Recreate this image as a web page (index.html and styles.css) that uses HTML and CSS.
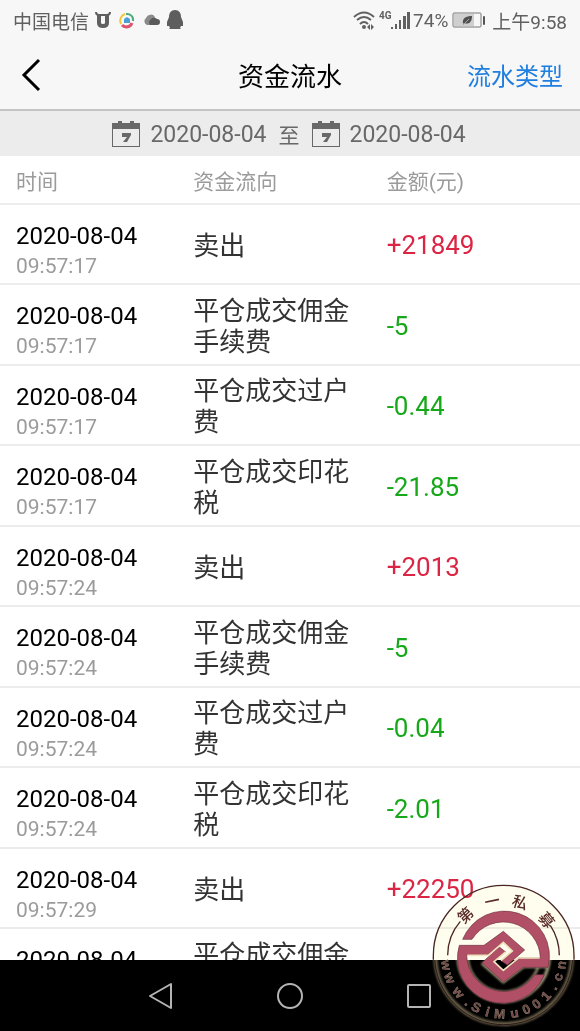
FILE: index.html
```
<!DOCTYPE html>
<html lang="zh-CN">
<head>
    <meta charset="UTF-8">
    <title>资金流水</title>
    <meta name="viewport" content="width=device-width">
    <link rel="stylesheet" href="styles.css">
</head>
<body>
    <div class="status">
        <div class="status-group">
            <span>中国电信</span>
            <svg class="icon-bull" width="18" height="18" viewBox="0 0 18 18" fill="none" stroke="#606060">
                <path d="M2 1q0 3 3 3h8q3 0 3-3" stroke-width="2"/>
                <path d="M5 4v8q0 3 4 3t4-3V4" stroke-width="4"/>
            </svg>
            <svg width="18" height="18" viewBox="0 0 18 18" fill="none" stroke-width="2">
                <path d="M3 13A7 7 0 0 1 7 3" stroke="#f0c63c"/>
                <path d="M8 3a6 6 0 0 1 7 7" stroke="#4dac7c"/>
                <path d="M14 12a6 6 0 0 1-10 2" stroke="#dd536c" stroke-width="3"/>
                <path d="M6 12V8l3-2 3 2v4z" fill="#4c9fd4"/>
            </svg>
            <svg width="18" height="18" viewBox="0 0 18 18">
                <path d="M5 14a4 4 0 0 1-1-7 5 5 0 0 1 9-1l-3 8z" fill="#8a8a8a"/>
                <path d="M8 14a4 4 0 0 1 1-6 4 4 0 0 1 6 0 3 3 0 0 1 0 6z" fill="#5a5a5a"/>
            </svg>
            <svg width="18" height="20" viewBox="0 0 18 20">
                <path d="M9 0c4 0 6 3 6 7l2 5v4h-2l-1 2 1 1H3l1-1-1-2H1v-4l2-5c0-4 2-7 6-7z" fill="#5e5e5e"/>
            </svg>
        </div>
        <div class="status-group status-right">
            <svg width="22" height="20" viewBox="0 0 22 20" fill="none" stroke="#606060" stroke-width="2">
                <path d="M1 7q10-9 20 0M4 10q7-6 14 0M7 14q4-4 8 0"/>
                <circle cx="11" cy="17" r="2" fill="#606060" stroke="none"/>
                <path d="M17 14l-3 3 3 3zM18 14l3 3-3 3z" fill="#606060" stroke="none"/>
            </svg>
            <svg class="icon-signal" width="32" height="20" viewBox="0 0 32 20" fill="#606060">
                <text class="net" x="0" y="9">4G</text>
                <path d="M12 17h2v2h-2zM16 14h2v5h-2zM20 10h2v9h-2zM24 6h3v13h-3zM28 2h3v17h-3z"/>
            </svg>
            <span>74%</span>
            <svg class="icon-battery" width="34" height="18" viewBox="0 0 34 18">
                <rect x="1" y="2" width="28" height="14" rx="1" fill="#f7f7f7" stroke="#777"/>
                <path d="M2 3h20v12H2z" fill="#cfcfcf"/>
                <path d="M11 13c-1-6 3-8 9-8 0 6-3 9-8 7z" fill="#505050"/>
                <path d="M11 14l6-6" stroke="#aaa"/>
                <rect x="31" y="5" width="2" height="9" rx="1" fill="#555"/>
            </svg>
            <span>上午9:58</span>
        </div>
    </div>

    <header class="bar">
        <button class="back" type="button" aria-label="返回">
            <svg width="20" height="34" viewBox="0 0 20 34" fill="none" stroke="#000" stroke-width="3">
                <path d="M18 2L3 17l15 15"/>
            </svg>
        </button>
        <h1>资金流水</h1>
        <a class="type" href="#">流水类型</a>
    </header>

    <div class="range">
        <button class="date" type="button">
            <svg width="28" height="26" viewBox="0 0 28 26">
                <path d="M0 2h6V0h4v2h8V0h4v2h6v24H0z" fill="#686868"/>
                <path d="M1 8h26v17H1z" fill="#ececec"/>
                <path d="M10 12h9v2l-4 7h-4l4-5h-5z" fill="#686868"/>
            </svg>
            <span>2020-08-04</span>
        </button>
        <span class="to">至</span>
        <button class="date" type="button">
            <svg width="28" height="26" viewBox="0 0 28 26">
                <path d="M0 2h6V0h4v2h8V0h4v2h6v24H0z" fill="#686868"/>
                <path d="M1 8h26v17H1z" fill="#ececec"/>
                <path d="M10 12h9v2l-4 7h-4l4-5h-5z" fill="#686868"/>
            </svg>
            <span>2020-08-04</span>
        </button>
    </div>

    <main>
        <table class="flow">
            <thead>
                <tr><th>时间</th><th>资金流向</th><th>金额(元)</th></tr>
            </thead>
            <tbody>
                <tr>
                    <td class="when">2020-08-04<small>09:57:17</small></td>
                    <td class="kind">卖出</td>
                    <td class="sum in">+21849</td>
                </tr>
                <tr>
                    <td class="when">2020-08-04<small>09:57:17</small></td>
                    <td class="kind">平仓成交佣金手续费</td>
                    <td class="sum out">-5</td>
                </tr>
                <tr>
                    <td class="when">2020-08-04<small>09:57:17</small></td>
                    <td class="kind">平仓成交过户费</td>
                    <td class="sum out">-0.44</td>
                </tr>
                <tr>
                    <td class="when">2020-08-04<small>09:57:17</small></td>
                    <td class="kind">平仓成交印花税</td>
                    <td class="sum out">-21.85</td>
                </tr>
                <tr>
                    <td class="when">2020-08-04<small>09:57:24</small></td>
                    <td class="kind">卖出</td>
                    <td class="sum in">+2013</td>
                </tr>
                <tr>
                    <td class="when">2020-08-04<small>09:57:24</small></td>
                    <td class="kind">平仓成交佣金手续费</td>
                    <td class="sum out">-5</td>
                </tr>
                <tr>
                    <td class="when">2020-08-04<small>09:57:24</small></td>
                    <td class="kind">平仓成交过户费</td>
                    <td class="sum out">-0.04</td>
                </tr>
                <tr>
                    <td class="when">2020-08-04<small>09:57:24</small></td>
                    <td class="kind">平仓成交印花税</td>
                    <td class="sum out">-2.01</td>
                </tr>
                <tr>
                    <td class="when">2020-08-04<small>09:57:29</small></td>
                    <td class="kind">卖出</td>
                    <td class="sum in">+22250</td>
                </tr>
                <tr>
                    <td class="when">2020-08-04</td>
                    <td class="kind">平仓成交佣金手续费</td>
                    <td class="sum"></td>
                </tr>
            </tbody>
        </table>
    </main>

    <nav class="keys">
        <button type="button" aria-label="后退">
            <svg width="28" height="28" viewBox="0 0 28 28"><path d="M3 14L24 2v24z"/></svg>
        </button>
        <button type="button" aria-label="主页">
            <svg width="28" height="28" viewBox="0 0 28 28"><circle cx="14" cy="14" r="12"/></svg>
        </button>
        <button type="button" aria-label="最近任务">
            <svg width="28" height="28" viewBox="0 0 28 28"><rect x="3" y="3" width="22" height="22" rx="1"/></svg>
        </button>
    </nav>

    <div class="seal">
        <svg viewBox="36 42 432 432">
            <defs>
                <path id="arc-top" d="M100 258a151 151 0 0 1 302 0"/>
                <path id="arc-bottom" d="M63 258a188 188 0 0 0 376 0"/>
                <clipPath id="lower"><path d="M30 270h440v210H30z"/></clipPath>
                <filter id="soft" x="-10%" y="-10%" width="120%" height="120%"><feGaussianBlur stdDeviation="3"/></filter>
            </defs>
            <!-- glow of the rings, seen on the dark bar only -->
            <g clip-path="url(#lower)" fill="none">
                <g filter="url(#soft)">
                    <circle cx="251" cy="257" r="205" stroke="#6b6049" stroke-width="12"/>
                    <circle cx="251" cy="258" r="137" stroke="#a39c7a" stroke-width="9"/>
                    <circle cx="251" cy="258" r="108" stroke="#8b8468" stroke-width="8"/>
                    <path d="M186 279l64 56 60-46h70" stroke="#a39c7a" stroke-width="10"/>
                </g>
                <circle cx="251" cy="257" r="207" stroke="#2b1a18" stroke-width="3"/>
            </g>
            <path d="M40 269v-12a211 211 0 0 1 422 0v12" fill="none" stroke="#4a2524" stroke-width="4"/>
            <path d="M83 256q0-58 38-102M418 256q0-48-27-90" fill="none" stroke="#4a2524" stroke-width="4"/>
            <g fill="#b14f67" stroke="#6f3041" stroke-width="2">
                <path d="M373 314A135 135 0 0 1 118 226H192L250 184 314 240 262 285 243 272 278 243 250 216 205 256H140A111 111 0 0 0 344 314z"/>
                <path d="M128 208A135 135 0 0 1 384 292H309L250 336 186 278 238 231 257 246 222 275 250 302 295 264H361A111 111 0 0 0 156 208z"/>
            </g>
            <path d="M142 256H205L250 217 277 243 243 272M359 264H295L250 301 222 275 257 246" fill="none" stroke="#eee3bd" stroke-width="5"/>
            <text class="seal-name" x="101 183 259 346"><textPath href="#arc-top">第一私募</textPath></text>
            <text class="seal-site" x="14 58 112 165 190 237 265 318 360 397 437 479 510 549"><textPath href="#arc-bottom">www.SiMu001.cn</textPath></text>
        </svg>
    </div>
</body>
</html>
```
FILE: styles.css
```
*{
    padding: 0;
    margin: 0;
    box-sizing: border-box;
}
body{
    display: flex;
    flex-direction: column;
    height: 100vh;
    overflow: hidden;
    position: relative;
    background-color: #fff;
    color: #000;
    font-family: Roboto, "Noto Sans CJK SC", sans-serif;
}
button{
    background: none;
    border: 0;
    font: inherit;
    color: inherit;
    cursor: pointer;
}
svg{
    display: block;
}
.status{
    display: flex;
    justify-content: space-between;
    align-items: center;
    flex: none;
    height: 40px;
    padding: 0 13px;
    background-color: #f7f7f7;
    color: #606060;
    font-size: 19px;
}
.status-group{
    display: flex;
    align-items: center;
    gap: 6px;
}
.icon-bull{
    margin-left: -1px;
}
.status-right{
    gap: 4px;
}
.icon-signal{
    margin-right: -2px;
}
.icon-battery{
    margin-right: 2px;
}
.net{
    font-size: 10px;
    font-weight: bold;
}
.bar{
    display: grid;
    grid-template-columns: 1fr auto 1fr;
    align-items: center;
    flex: none;
    height: 71px;
    padding: 0 17px;
    background-color: #f7f7f7;
    border-bottom: 2px solid #c4c4c4;
}
.back{
    justify-self: start;
    padding-left: 4px;
}
.bar h1{
    font-size: 26px;
    font-weight: 400;
}
.type{
    justify-self: end;
    color: #1f7ee0;
    font-size: 24px;
    text-decoration: none;
}
.range{
    display: flex;
    justify-content: center;
    align-items: center;
    gap: 12px;
    flex: none;
    height: 45px;
    padding-right: 2px;
    background-color: #ececec;
    color: #686868;
    font-size: 23px;
}
.date{
    display: flex;
    align-items: center;
    gap: 10px;
}
.date span{
    padding-top: 2px;
}
.to{
    font-size: 21px;
}
main{
    flex: 1;
    min-height: 0;
    overflow: hidden;
}
.flow{
    width: 100%;
    table-layout: fixed;
    border-collapse: separate;
    border-spacing: 0;
}
.flow th,
.flow td{
    border-bottom: 2px solid #ececec;
    text-align: left;
    vertical-align: middle;
}
.flow th{
    height: 49px;
    color: #9b9b9b;
    font-size: 21px;
    font-weight: 400;
}
.flow td{
    height: 80px;
}
.flow tr:nth-child(even) td{
    height: 81px;
}
.flow th:first-child,
.flow td:first-child{
    padding-left: 16px;
}
.flow .when{
    padding-top: 16px;
    font-size: 24px;
    line-height: 30px;
    vertical-align: top;
}
.when small{
    display: block;
    color: #9b9b9b;
    font-size: 21px;
}
.kind{
    padding: 4px 16px 0 0;
    color: #333;
    font-size: 26px;
    line-height: 31px;
}
.sum{
    padding-top: 2px;
    font-size: 26px;
}
.in{
    color: #dc2444;
}
.out{
    color: #17a81a;
}
.keys{
    display: flex;
    justify-content: center;
    align-items: center;
    gap: 101px;
    flex: none;
    height: 71px;
    background-color: #000;
}
.keys svg{
    fill: none;
    stroke: #b4b4b4;
    stroke-width: 2;
    stroke-linejoin: round;
}
/* stamp over the bottom right corner */
.seal{
    position: absolute;
    right: 4px;
    bottom: 3px;
    width: 144px;
    height: 144px;
}
.seal::before{
    content: "";
    position: absolute;
    inset: 1px;
    border-radius: 50%;
    background-color: #fffeee;
    mix-blend-mode: multiply;
}
.seal svg{
    position: relative;
    width: 100%;
}
.seal-name{
    fill: #5a2a28;
    font-family: "Noto Sans CJK SC", sans-serif;
    font-size: 46px;
    font-weight: 500;
}
.seal-site{
    fill: #6d4544;
    stroke: #a89a82;
    stroke-width: 1;
    font-family: "Liberation Sans", sans-serif;
    font-size: 40px;
    font-weight: bold;
}
```
